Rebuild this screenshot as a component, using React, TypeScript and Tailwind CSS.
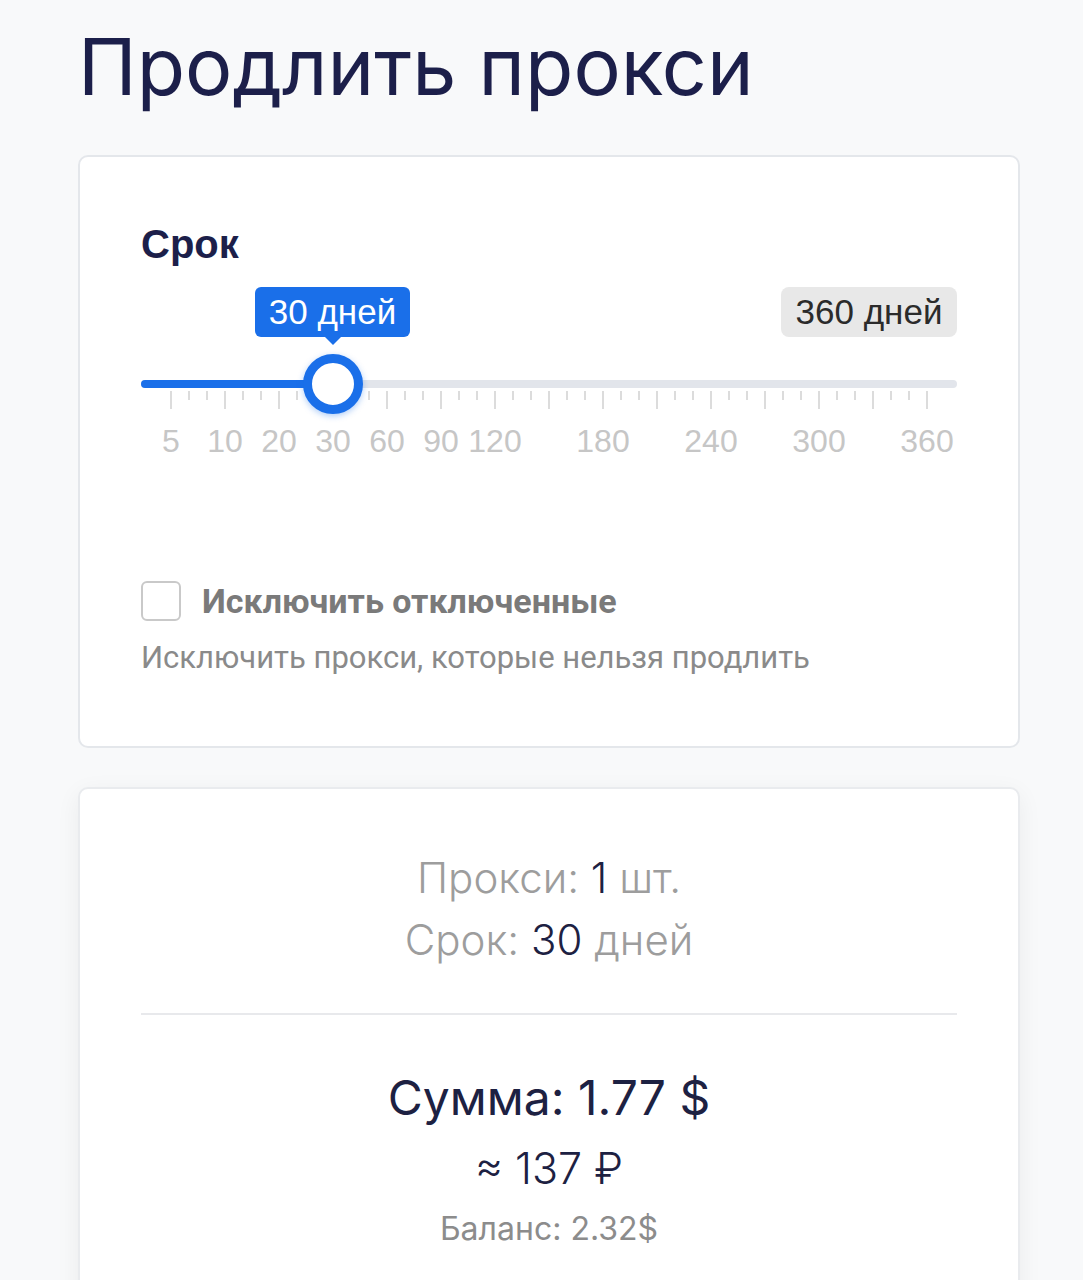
import React from 'react';

const BLUE = '#1a6fe9';

// tick grid: every 18px from first to last mark, every 3rd is major
const TICKS = Array.from({ length: 43 }, (_, i) => i);
const LABELS: { v: string; k: number }[] = [
  { v: '5', k: 0 },
  { v: '10', k: 1 },
  { v: '20', k: 2 },
  { v: '30', k: 3 },
  { v: '60', k: 4 },
  { v: '90', k: 5 },
  { v: '120', k: 6 },
  { v: '180', k: 8 },
  { v: '240', k: 10 },
  { v: '300', k: 12 },
  { v: '360', k: 14 },
];

const PeriodSlider: React.FC = () => {
  return (
    <div className="font-['Liberation_Sans',Arial,sans-serif]">
      {/* value bubbles */}
      <div className="relative h-[50px] mt-[23px]">
        <div className="absolute left-[114px] top-0 w-[155px] h-[50px] rounded-[6px] bg-[#1a6fe9] text-white text-[35px] leading-[50px] text-center">
          30 дней
          <div className="absolute left-1/2 -translate-x-1/2 top-[50px] w-0 h-0 border-l-[8px] border-r-[8px] border-t-[8px] border-l-transparent border-r-transparent border-t-[#1a6fe9]" />
        </div>
        <div className="absolute right-0 top-0 w-[176px] h-[50px] rounded-[8px] bg-[#e8e8e8] text-[#2b2b2b] text-[35px] leading-[50px] text-center">
          360 дней
        </div>
      </div>

      {/* track */}
      <div className="relative h-[8px] mt-[43px] rounded-full bg-[#e2e5eb]">
        <div className="absolute left-0 top-0 h-[8px] w-[192px] rounded-full" style={{ background: BLUE }} />
        <div className="absolute left-[162px] top-[-26px] w-[60px] h-[60px] rounded-full bg-white border-[9px] border-[#1a6fe9] shadow-[0_2px_6px_rgba(26,111,233,0.35)]" />
      </div>

      {/* ticks */}
      <div className="flex justify-between items-start ml-[29px] w-[758px] mt-[3px]">
        {TICKS.map((i) => (
          <div key={i} className={`w-[2px] bg-[#dcdcdc] ${i % 3 === 0 ? 'h-[18px]' : 'h-[9px]'}`} />
        ))}
      </div>

      {/* labels */}
      <div className="relative h-[32px] mt-[16px] ml-[30px]">
        {LABELS.map((l) => (
          <span
            key={l.v}
            className="absolute top-0 -translate-x-1/2 text-[32px] leading-[32px] text-[#c6c6c6]"
            style={{ left: l.k * 54 }}
          >
            {l.v}
          </span>
        ))}
      </div>
    </div>
  );
};

export default function App() {
  return (
    <div className="min-h-[1280px] bg-[#f8f9fa] pl-[78px] pr-[63px] pb-10">
      <h1 className="pt-[18px] text-[79px] leading-[96px] text-[#1c1f4a] font-['Inter',sans-serif] font-normal">
        Продлить прокси
      </h1>

      {/* period card */}
      <div className="mt-[41px] bg-white border-2 border-[#e4e7eb] rounded-[10px] px-[61px] pt-[67px] pb-[72px]">
        <h3 className="text-[40px] leading-[40px] font-bold text-[#1c1f4a] font-['Liberation_Sans',Arial,sans-serif]">
          Срок
        </h3>

        <PeriodSlider />

        <label className="flex items-center gap-[21px] mt-[124px] font-['Roboto',sans-serif]">
          <span className="w-[40px] h-[40px] rounded-[6px] border-2 border-[#c9c9c9] bg-white" />
          <span className="text-[34px] leading-[40px] font-bold text-[#7a7a7a]">Исключить отключенные</span>
        </label>
        <p className="mt-[21px] text-[31px] leading-[32px] text-[#8a8a8a] font-['Roboto',sans-serif]">
          Исключить прокси, которые нельзя продлить
        </p>
      </div>

      {/* summary card */}
      <div className="mt-[39px] bg-white border-2 border-[#e9ebee] rounded-[10px] shadow-[0_6px_24px_rgba(0,0,0,0.06)] px-[61px] pt-[58px] pb-[60px] text-center font-['Inter',sans-serif]">
        <div className="text-[42px] leading-[62px] text-[#9d9d9d] font-light">
          <div>
            Прокси: <span className="text-[#1d2142]">1</span> шт.
          </div>
          <div>
            Срок: <span className="text-[#1d2142]">30</span> дней
          </div>
        </div>

        <div className="mt-[42px] h-[2px] bg-[#e8e9ec]" />

        <div className="mt-[53px] text-[48px] leading-[60px] font-normal text-[#1d2142]">Сумма: 1.77 $</div>
        <div className="mt-[10px] text-[43px] leading-[60px] font-light text-[#1d2142]">≈ 137 ₽</div>
        <div className="mt-[11px] text-[32px] leading-[40px] text-[#8c8c8c]">Баланс: 2.32$</div>
      </div>
    </div>
  );
}
